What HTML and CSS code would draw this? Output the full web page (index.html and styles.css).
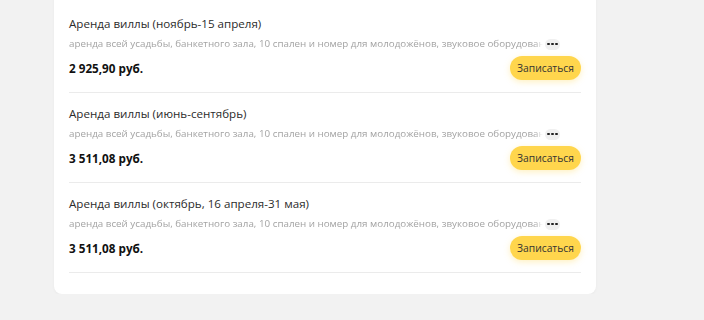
FILE: index.html
```html
<!DOCTYPE html>
<html lang="ru">
<head>
    <meta charset="UTF-8">
    <meta name="viewport" content="width=device-width, initial-scale=1.0">
    <title>Услуги</title>
    <link rel="stylesheet" href="styles.css">
</head>
<body>
    <div class="card">
        <div class="service">
            <div class="service-title">Аренда виллы (ноябрь-15 апреля)</div>
            <div class="service-desc">
                <span class="desc-text">аренда всей усадьбы, банкетного зала, 10 спален и номер для молодожёнов, звуковое оборудование, мангальная зона</span>
                <span class="more-btn"><i></i><i></i><i></i></span>
            </div>
            <div class="service-footer">
                <div class="price">2 925,90 руб.</div>
                <button class="book-btn">Записаться</button>
            </div>
        </div>

        <div class="service">
            <div class="service-title">Аренда виллы (июнь-сентябрь)</div>
            <div class="service-desc">
                <span class="desc-text">аренда всей усадьбы, банкетного зала, 10 спален и номер для молодожёнов, звуковое оборудование, мангальная зона</span>
                <span class="more-btn"><i></i><i></i><i></i></span>
            </div>
            <div class="service-footer">
                <div class="price">3 511,08 руб.</div>
                <button class="book-btn">Записаться</button>
            </div>
        </div>

        <div class="service">
            <div class="service-title">Аренда виллы (октябрь, 16 апреля-31 мая)</div>
            <div class="service-desc">
                <span class="desc-text">аренда всей усадьбы, банкетного зала, 10 спален и номер для молодожёнов, звуковое оборудование, мангальная зона</span>
                <span class="more-btn"><i></i><i></i><i></i></span>
            </div>
            <div class="service-footer">
                <div class="price">3 511,08 руб.</div>
                <button class="book-btn">Записаться</button>
            </div>
        </div>
    </div>
</body>
</html>
```

FILE: styles.css
```css
:root {
    --bg-page: #f2f2f2;
    --bg-card: #ffffff;
    --text-primary: #2b2b2b;
    --text-secondary: #a3a3a3;
    --line: #ebebeb;
    --accent: #ffd64d;
}

* {
    margin: 0;
    padding: 0;
    box-sizing: border-box;
    font-family: 'Open Sans', 'Noto Sans', sans-serif;
}

body {
    background-color: var(--bg-page);
    color: var(--text-primary);
}

.card {
    width: 542px;
    margin: -20px 0 0 54px;
    padding: 23px 15px 21px;
    background-color: var(--bg-card);
    border-radius: 0 0 8px 8px;
    box-shadow: 0 1px 3px rgba(0, 0, 0, 0.04);
}

.service {
    padding: 12px 0 12px;
    border-bottom: 1px solid var(--line);
}

.service-title {
    font-size: 11.6px;
    line-height: 18px;
    color: var(--text-primary);
}

.service-desc {
    display: flex;
    align-items: center;
    margin-top: 3px;
    height: 16px;
    width: 491px;
}

.desc-text {
    flex: 1;
    min-width: 0;
    font-size: 9.8px;
    line-height: 16px;
    color: var(--text-secondary);
    white-space: nowrap;
    overflow: hidden;
    -webkit-mask-image: linear-gradient(to right, #000 calc(100% - 8px), transparent);
    mask-image: linear-gradient(to right, #000 calc(100% - 8px), transparent);
}

.more-btn {
    display: flex;
    align-items: center;
    justify-content: center;
    gap: 1.5px;
    width: 15px;
    height: 11px;
    margin-left: 2px;
    border-radius: 6px;
    background-color: #f0f0f0;
}

.more-btn i {
    width: 2.5px;
    height: 2.5px;
    border-radius: 50%;
    background-color: #222;
}

.service-footer {
    display: flex;
    align-items: center;
    justify-content: space-between;
    margin-top: 4px;
    height: 24px;
}

.price {
    font-size: 11.7px;
    font-weight: 700;
    color: #111;
}

.book-btn {
    width: 71px;
    height: 24px;
    border: none;
    border-radius: 12px;
    background-color: var(--accent);
    color: #333;
    font-size: 10.3px;
    cursor: pointer;
    box-shadow: 0 2px 6px rgba(255, 214, 77, 0.35);
}
```
